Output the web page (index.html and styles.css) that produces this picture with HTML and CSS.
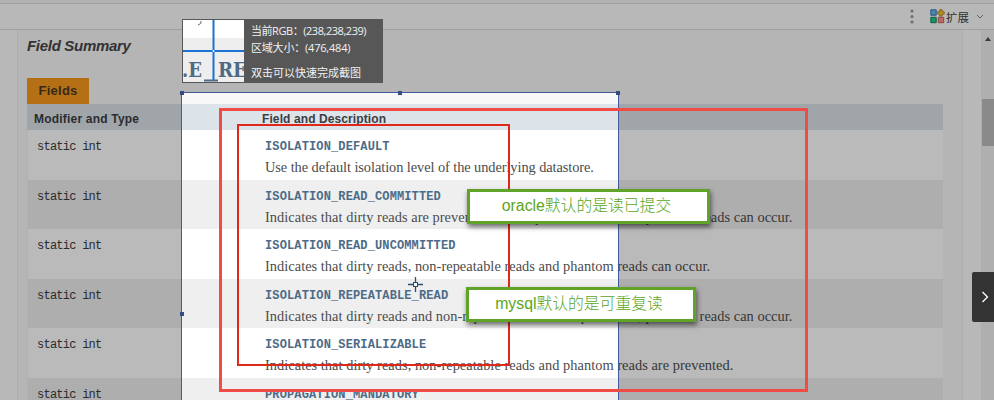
FILE: index.html
```html
<!DOCTYPE html>
<html lang="zh-CN">
<head>
<meta charset="utf-8">
<title>Field Summary</title>
<link rel="stylesheet" href="styles.css">
</head>
<body>
<div class="window">
  <header class="toolbar">
    <svg class="dots" width="4" height="16" viewBox="0 0 4 16"><circle cx="2" cy="2" r="1.6"/><circle cx="2" cy="7.5" r="1.6"/><circle cx="2" cy="13" r="1.6"/></svg>
    <svg class="ext" width="15" height="15" viewBox="0 0 15 15"><path fill="#69b7f5" stroke="#3976b2" d="M.8.8h5.400v5.400H.8z"/><path fill="#26c784" stroke="#11865a" d="M.8 8.300h5.400v5.400H.8z"/><path fill="#ff9290" stroke="#ca625d" d="M8.300 8.300h5.400v5.400H8.300z"/><path fill="#ffc62e" stroke="#aa7811" stroke-width=".8" d="M9.800.7h2.400v2h2v2.400h-2v2H9.800v-2h-2V2.700h2z"/></svg>
    <span>扩展</span>
    <svg class="down" width="8" height="5" viewBox="0 0 8 5"><path fill="none" stroke="#888" d="M1 1l3 3 3-3"/></svg>
  </header>
  <div class="body">
    <main class="doc">
      <h3>Field Summary</h3>
      <div class="caption">Fields</div>
      <div class="table">
        <div class="head"><span>Modifier and Type</span><span>Field and Description</span></div>
        <div class="row"><code>static int</code><div><b>ISOLATION_DEFAULT</b><p class="tight">Use the default isolation level of the underlying datastore.</p></div></div>
        <div class="row alt"><code>static int</code><div><b>ISOLATION_READ_COMMITTED</b><p>Indicates that dirty reads are prevented; non-repeatable reads and phantom reads can occur.</p></div></div>
        <div class="row"><code>static int</code><div><b>ISOLATION_READ_UNCOMMITTED</b><p>Indicates that dirty reads, non-repeatable reads and phantom reads can occur.</p></div></div>
        <div class="row alt"><code>static int</code><div><b>ISOLATION_REPEATABLE_READ</b><p>Indicates that dirty reads and non-repeatable reads are prevented; phantom reads can occur.</p></div></div>
        <div class="row"><code>static int</code><div><b>ISOLATION_SERIALIZABLE</b><p>Indicates that dirty reads, non-repeatable reads and phantom reads are prevented.</p></div></div>
        <div class="row alt"><code>static int</code><div><b>PROPAGATION_MANDATORY</b></div></div>
      </div>
    </main>
    <aside class="scroll"><i class="up"></i><i class="thumb"></i></aside>
  </div>
  <div class="selection"><i class="h h1"></i><i class="h h2"></i><i class="h h3"></i><i class="h h4"></i></div>
  <div class="info">
    <svg width="61" height="62" viewBox="0 0 61 62"><rect width="61" height="62" fill="#fff"/><rect y="18" width="61" height="44" fill="#eeeeef"/><path d="M18 1q1 3-3 4" fill="none" stroke="#666"/><text x="-1" y="57" class="mag" textLength="20" lengthAdjust="spacingAndGlyphs">.E</text><text x="35" y="57" class="mag" textLength="29" lengthAdjust="spacingAndGlyphs">RE</text><path d="M21 60.500h14" stroke="#516a83" stroke-width="2"/><path d="M30.500 0v60M0 31h61" stroke="#1b73d4" stroke-width="2"/><circle cx="30.500" cy="31" r="1" fill="#fff"/></svg>
    <div class="stats"><span class="rgb">当前RGB：(238,238,239)</span><span class="size">区域大小：(476,484)</span><span class="tip">双击可以快速完成截图</span></div>
  </div>
  <div class="box inner"></div>
  <div class="box outer"></div>
  <div class="note n1"><span>oracle默认的是读已提交</span></div>
  <div class="note n2"><span>mysql默认的是可重复读</span></div>
  <svg class="cursor" width="17" height="17" viewBox="0 0 17 17"><path d="M8.500 1v5M8.500 11v5M1 8.500h5M11 8.500h5" stroke="#294f6f" stroke-width="1.300"/><rect x="6.500" y="6.500" width="4" height="4" fill="#fff" stroke="#294f6f"/></svg>
  <div class="drawer"><svg width="8" height="12" viewBox="0 0 8 12"><path d="M1.500 1l5 5-5 5" fill="none" stroke="#fff" stroke-width="1.300"/></svg></div>
</div>
</body>
</html>
```
FILE: styles.css
```css
* { box-sizing: border-box; }
body { margin: 0; }
.window { position: relative; width: 994px; height: 400px; overflow: hidden; background: #fff; display: flex; flex-direction: column; font-family: "Liberation Sans", "Noto Sans CJK SC", sans-serif; }
.toolbar { height: 30px; flex: none; display: flex; align-items: center; justify-content: flex-end; padding: 4px 10px 0 0; border-bottom: 1px solid #dcdcdc; background: linear-gradient(#f3f3f3 3px, #dadada 3px, #dadada 4px, #fcfcfc 4px); font-size: 11.5px; color: #444; }
.dots { fill: #999; margin-right: 16px; }
.ext { margin-right: 1px; }
.down { margin-left: 7px; }
.body { flex: 1; min-height: 0; display: flex; background: #fcfcfc; }
.doc { width: 946px; margin: 0 18px 0 17px; padding: 0 19px 0 9px; border: solid #ededed; border-width: 0 1px; background: #f8f8f9; height: 370px; overflow: hidden; }
h3 { margin: 6px 0 0; font: italic bold 15px/20px "Liberation Sans", sans-serif; letter-spacing: -.3px; color: #474747; height: 42px; }
.caption { width: 62px; height: 26px; background: #f8981d; color: #4b3b25; font: bold 13px/26px "Liberation Sans", sans-serif; letter-spacing: .25px; padding-left: 11.5px; }
.table { width: 916px; }
.head { display: flex; height: 26px; background: #dce3e9; font: bold 12px/31px "Liberation Sans", sans-serif; letter-spacing: .1px; color: #3b3d42; padding-left: 7px; }
.head span:first-child { width: 228px; letter-spacing: .2px; }
.row { display: flex; height: 49.6px; padding: 10px 0 0 9px; background: #fff; border-left: 1px solid #f5f5f5; }
.alt { background: #efeff0; }
.row code { width: 228px; font: 12px/14px "Liberation Mono", monospace; letter-spacing: -.75px; color: #3c3c3c; }
.row b { display: block; font: bold 12px/14px "Liberation Mono", monospace; letter-spacing: .13px; color: #4d6b87; }
.row p { margin: 4px 0 0; font: 14.4px/18px "Liberation Serif", serif; letter-spacing: .03px; white-space: nowrap; color: #4c4c4c; }
.row .tight { letter-spacing: -.08px; }
.scroll { width: 13px; background: #f0f0f0; display: flex; flex-direction: column; align-items: center; }
.up { margin-top: 7px; border: solid transparent; border-width: 0 3px 4px; border-bottom-color: #505050; }
.thumb { width: 12px; height: 47px; margin-top: 58px; background: #bebebe; }
.selection { position: absolute; left: 181px; top: 92px; width: 438px; height: 320px; border: 1px solid #435b98; box-shadow: 0 0 0 1200px rgba(0,0,0,.27); }
.h { position: absolute; width: 4px; height: 4px; background: #354d83; }
.h1 { left: -2px; top: -2px; }
.h2 { left: 216px; top: -2px; }
.h3 { right: -2px; top: -2px; }
.h4 { left: -2px; top: 219px; }
.info { position: absolute; left: 182px; top: 19px; width: 201px; height: 64px; padding: 1px; background: #575757; display: flex; color: #f2f2f2; }
.mag { font: bold 21px "DejaVu Serif", serif; fill: #516a83; }
.stats { display: flex; flex-direction: column; padding: 2px 0 0 7px; white-space: nowrap; font: 11px/17px "Open Sans", "Noto Sans CJK SC", sans-serif; }
.rgb { letter-spacing: -.45px; }
.size { letter-spacing: -.2px; }
.tip { margin-top: 8px; }
.box { position: absolute; }
.outer { left: 219px; top: 108px; width: 589px; height: 284px; border: 3px solid #ee4c45; }
.inner { left: 237px; top: 124px; width: 273px; height: 242px; border: 2px solid #df2819; }
.note { position: absolute; height: 35px; border: 3px solid #5fa329; background: #fff; box-shadow: 1px 3px 5px rgba(0,0,0,.55); color: #5ba623; font: 300 15.8px/28px "Liberation Sans", "Noto Sans CJK SC", sans-serif; text-align: center; white-space: nowrap; }
.n1 { left: 467px; top: 189px; width: 243px; padding-right: 4px; }
.n2 { left: 466px; top: 287px; width: 230px; padding-right: 4px; }
.cursor { position: absolute; left: 407px; top: 276px; }
.drawer { position: absolute; left: 972px; top: 272px; width: 22px; height: 50px; padding-left: 4px; border-radius: 2px 0 0 2px; background: #333; display: flex; align-items: center; justify-content: center; }
```
